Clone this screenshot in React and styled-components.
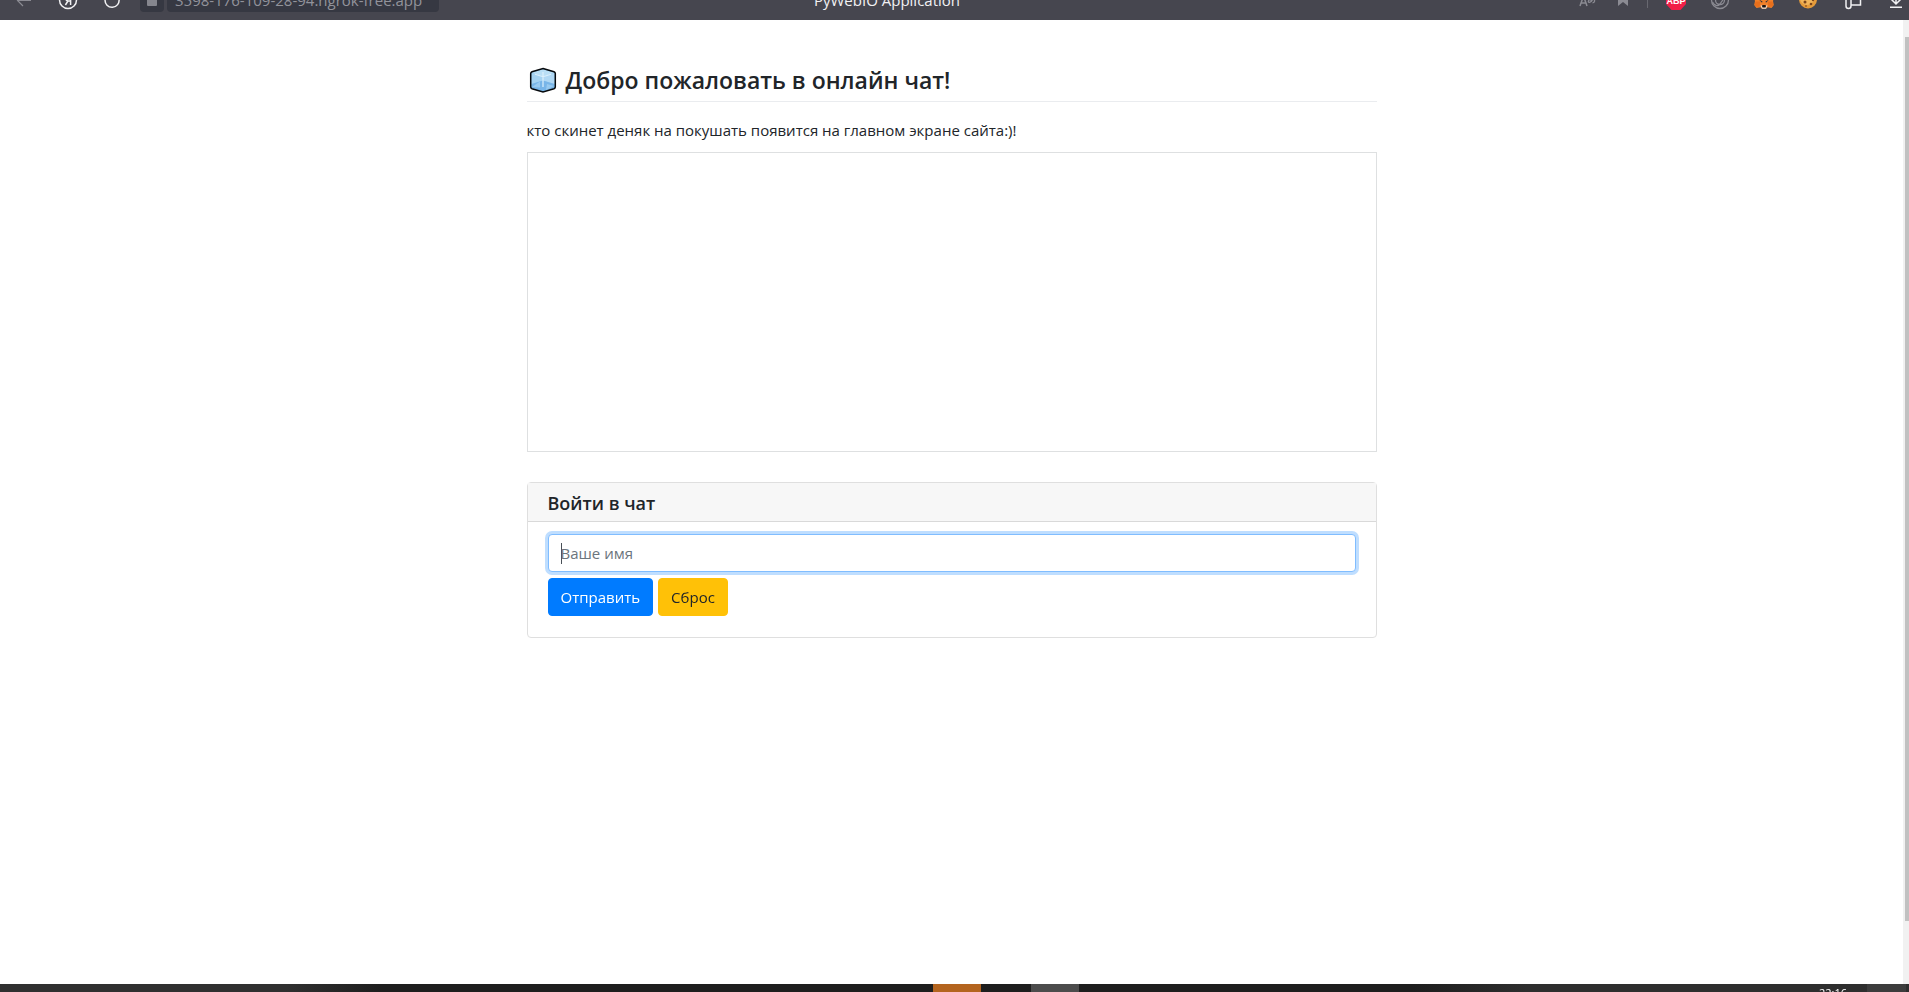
import React, { useState } from "react";
import styled, { createGlobalStyle } from "styled-components";

const GlobalStyle = createGlobalStyle`
  *, *::before, *::after {
    box-sizing: border-box;
  }

  body {
    margin: 0;
    background-color: #fff;
    color: #212529;
    font-family: "Open Sans", "Noto Sans", sans-serif;
    font-size: 15px;
    line-height: 24px;
  }
`;

const Screen = styled.div`
  display: flex;
  flex-direction: column;
  height: 100vh;
  overflow: hidden;
`;

/* browser bar */

const BrowserBar = styled.header`
  display: flex;
  align-items: flex-end;
  flex: none;
  height: 20px;
  padding: 0 1px 8px 12px;
  overflow: hidden;
  background-color: #46464f;
`;

const Group = styled.div`
  display: flex;
  align-items: center;
  gap: ${(props) => props.$gap}px;
`;

const BarButton = styled.button`
  display: flex;
  flex: none;
  width: 24px;
  height: 24px;
  padding: 0;
  border: 0;
  background: none;
  color: ${(props) => (props.$dim ? "#8b8b93" : "#f1f1f3")};
`;

const Address = styled.div`
  display: flex;
  gap: 3px;
  margin-left: 16px;
`;

const LockButton = styled(BarButton)`
  border-radius: 4px;
  background-color: #363842;
  color: #85868e;
`;

const AddressInput = styled.input`
  width: 272px;
  height: 24px;
  padding: 0 8px;
  border: 0;
  border-radius: 4px;
  background-color: #363842;
  color: #92939b;
  font: inherit;
`;

const PageTitle = styled.div`
  flex: 1;
  padding-right: 240px;
  color: #f1f1f3;
  text-align: center;
  white-space: nowrap;
`;

const Divider = styled.span`
  width: 1px;
  height: 16px;
  margin-right: 16px;
  background-color: #686870;
`;

/* page */

const Viewport = styled.div`
  display: flex;
  flex: 1;
  min-height: 0;
`;

const Page = styled.main`
  flex: 1;
  padding: 46px 16px 0;
`;

const Container = styled.div`
  max-width: 850px;
  margin: 0 auto;
`;

const Heading = styled.h2`
  display: flex;
  align-items: center;
  gap: 8px;
  margin: 0 0 16px;
  padding-bottom: 7px;
  border-bottom: 1px solid #eaecef;
  font-size: 23px;
  font-weight: 600;
  line-height: 28px;
`;

const Text = styled.p`
  margin: 0 0 10px;
`;

const MessageBox = styled.div`
  height: 300px;
  margin-bottom: 30px;
  border: 1px solid #dee0e1;
`;

const Card = styled.form`
  border: 1px solid #dfdfdf;
  border-radius: 4px;
`;

const CardHeader = styled.h5`
  margin: 0;
  padding: 8px 20px 6px;
  border-bottom: 1px solid #d9d9d9;
  background-color: #f7f7f7;
  font-size: 18px;
  font-weight: 600;
  line-height: 24px;
`;

const CardBody = styled.div`
  padding: 12px 20px 21px;
`;

const NameInput = styled.input`
  display: block;
  width: 100%;
  height: 38px;
  padding: 6px 12px;
  border: 1px solid #ced4da;
  border-radius: 4px;
  background-color: #fff;
  color: #495057;
  font: inherit;

  &::placeholder {
    color: #6c757d;
  }

  &:focus {
    border-color: #80bdff;
    outline: 0;
    box-shadow: 0 0 0 3px #bfdeff;
  }

  /* steady caret while the field is empty */
  &:focus:placeholder-shown {
    caret-color: transparent;
    background-image: linear-gradient(#495057, #495057);
    background-position: 12px center;
    background-repeat: no-repeat;
    background-size: 1px 21px;
  }
`;

const Actions = styled.div`
  display: flex;
  gap: 5px;
  margin-top: 6px;
`;

const Button = styled.button`
  height: 38px;
  padding: 6px 12px;
  border: 1px solid ${(props) => props.$bg};
  border-radius: 4px;
  background-color: ${(props) => props.$bg};
  color: ${(props) => props.$color};
  font: inherit;
`;

const ScrollTrack = styled.div`
  display: flex;
  flex-direction: column;
  flex: none;
  width: 6px;
  padding: 17px 0 63px 2px;
  background-color: #f1f1f1;
`;

const ScrollThumb = styled.div`
  flex: 1;
  background-color: #c1c1c1;
`;

/* taskbar */

const Taskbar = styled.footer`
  display: flex;
  flex: none;
  height: 8px;
  overflow: hidden;
  background: linear-gradient(
    90deg,
    #303030 15%,
    #1e1e1e 20%,
    #1e1e1e 74%,
    #2e2e2e 80%
  );
`;

const Tasks = styled.div`
  display: flex;
  flex: 1;
  gap: 50px;
  padding-left: 933px;
`;

const Task = styled.div`
  width: 48px;
  background-color: ${(props) => props.$bg};
`;

const Clock = styled.time`
  padding: 1px 20px 0 0;
  color: #fff;
  font-size: 11px;
  line-height: 16px;
`;

const Notifications = styled.div`
  width: 39px;
  margin-right: 3px;
  background-color: #3c3c3c;
`;

const Icon = ({ children }) => (
  <svg
    width="24"
    height="24"
    viewBox="0 0 24 24"
    fill="none"
    stroke="currentColor"
    strokeWidth="1.5"
    aria-hidden="true"
  >
    {children}
  </svg>
);

const BackIcon = () => (
  <Icon>
    <path d="M19 12.5H5.5M11 7l-5.5 5.5L11 18" strokeWidth="1.2" />
  </Icon>
);

const YandexIcon = () => (
  <Icon>
    <circle cx="12" cy="12" r="8.5" />
    <path d="M14.6 17V7.5h-2.2a2.7 2.7 0 0 0 0 5.4h2.2M12 13l-2.6 4" />
  </Icon>
);

const ReloadIcon = () => (
  <Icon>
    <path d="M15.5 6.2A7 7 0 1 1 8 6.6" />
    <path d="M15 2v5h5" />
  </Icon>
);

const LockIcon = () => (
  <Icon>
    <rect x="7" y="9" width="10" height="9" rx="1" fill="currentColor" stroke="none" />
    <path d="M9 9V7a3 3 0 0 1 6 0v2" />
  </Icon>
);

const TranslateIcon = () => (
  <Icon>
    <path d="M5 18l3.5-10L12 18M6 15h5" />
    <path
      d="M13 8.500h6M15.500 6.500c0 4 0 6 1 7.500M18 10.500c-1 3-3.500 4.500-4.500 3.500s2-4 4.500-3 2 3.500-.5 4"
      strokeWidth="1.2"
    />
  </Icon>
);

const BookmarkIcon = () => (
  <Icon>
    <path d="M7 5h10v13l-5-4-5 4z" fill="currentColor" stroke="none" />
  </Icon>
);

const AdblockIcon = () => (
  <Icon>
    <path d="M8 2h8l6 6v8l-5.5 6h-9L2 16V8z" fill="#f21f48" stroke="none" />
    <text
      x="12"
      y="15.5"
      fill="#fff"
      stroke="none"
      fontSize="9"
      fontWeight="800"
      textAnchor="middle"
    >
      ABP
    </text>
  </Icon>
);

const ShieldIcon = () => (
  <Icon>
    <circle cx="12" cy="12" r="8.5" strokeWidth="1.3" />
    <path d="M7.500 9v3a4.500 4.500 0 0 0 9 0V9" strokeWidth="1.3" />
    <path d="M4.500 14c2 3.500 5 4.500 7 2.500L17 9" strokeWidth="1.2" />
  </Icon>
);

const FoxIcon = () => (
  <Icon>
    <g stroke="none">
      <path d="M3 3l7 4h4l7-4 1 7-1 3 .8 4-2.3 3-4-.7-1.500 1.400h-4l-1.500-1.400-4 .7-2.300-3L3 13l-1-3z" fill="#f0812a" />
      <path d="M3.500 13.500h5l-1 5.500-4-.5-.8-1.500zM20.500 13.500h-5l1 5.500 4-.5.8-1.500z" fill="#e86f1c" />
      <path d="M7 11.500l3.500 2-.5 1.200zM17 11.500l-3.500 2 .5 1.200z" fill="#28313c" />
      <path d="M8.500 17.500h7l-1.500 3.300h-4z" fill="#e8dcd2" />
      <path d="M10 18l.5-1h3l.5 1-.5 1.500h-3z" fill="#1c1410" />
    </g>
  </Icon>
);

const CookieIcon = () => (
  <Icon>
    <g stroke="none">
      <circle cx="12" cy="11.5" r="9" fill="#e59b3a" />
      <circle cx="11" cy="10" r="7" fill="#f2b55a" />
      <circle cx="9" cy="14" r="1.5" fill="#7a451c" />
      <circle cx="15" cy="16" r="1.3" fill="#7a451c" />
      <circle cx="17" cy="12" r="1.2" fill="#7a451c" />
      <circle cx="12" cy="11" r="1" fill="#7a451c" />
      <circle cx="10" cy="18" r="1" fill="#a35f22" />
    </g>
  </Icon>
);

const PanelIcon = () => (
  <Icon>
    <path d="M11 17h9.500V5H11" />
    <path d="M11 5v13a2.500 2.500 0 0 1-5 0V5" />
  </Icon>
);

const DownloadIcon = () => (
  <Icon>
    <path d="M12 3v13M6.500 10.500L12 16l5.500-5.500M6 19.300h12" />
  </Icon>
);

const iceOutline =
  "M14 2.5L25 5.800q1.300.5 1.300 1.700v13.600q0 1.200-1.300 1.700L14 26 3 22.800q-1.300-.5-1.300-1.700V7.500Q1.700 6.300 3 5.800z";

const IceIcon = () => (
  <svg width="31" height="28" viewBox="-1 0 29 28" aria-hidden="true">
    <path d={iceOutline} fill="#94c9ee" />
    <path d="M2.500 6.800L14 3.300l11.500 3.500L14 10.500z" fill="#b9dff6" />
    <path d="M2.500 7v11L14 14.500v-4z" fill="#a5d3f2" />
    <path d="M25.500 7v11L14 14.500v-4z" fill="#b0d8f4" />
    <path d="M2.500 18L14 14.500 25.500 18v4L14 25.200 2.500 22z" fill="#78b5e8" />
    <path d="M3 21l8-5.500v6zM25 20l-8 4 1-6z" fill="#98caf0" />
    <path
      d="M6 8.300l8 2.400 8-2.400M14 6v15"
      fill="none"
      stroke="#dcf0fc"
      strokeWidth="1.2"
    />
    <path d={iceOutline} fill="none" stroke="#06090c" strokeWidth="1.5" />
  </svg>
);

const App = () => {
  const [name, setName] = useState("");

  const handleSubmit = (e) => {
    e.preventDefault();
  };

  return (
    <Screen>
      <GlobalStyle />
      <BrowserBar>
        <Group $gap={20}>
          <BarButton type="button" aria-label="Назад" $dim>
            <BackIcon />
          </BarButton>
          <BarButton type="button" aria-label="Яндекс">
            <YandexIcon />
          </BarButton>
          <BarButton type="button" aria-label="Обновить">
            <ReloadIcon />
          </BarButton>
        </Group>
        <Address>
          <LockButton type="button" aria-label="Защита">
            <LockIcon />
          </LockButton>
          <AddressInput
            aria-label="Адрес"
            defaultValue="3598-176-109-28-94.ngrok-free.app"
          />
        </Address>
        <PageTitle>PyWebIO Application</PageTitle>
        <Group $gap={12}>
          <BarButton type="button" aria-label="Перевести" $dim>
            <TranslateIcon />
          </BarButton>
          <BarButton type="button" aria-label="Закладка" $dim>
            <BookmarkIcon />
          </BarButton>
          <Divider />
        </Group>
        <Group $gap={20}>
          <BarButton type="button" aria-label="Adblock Plus">
            <AdblockIcon />
          </BarButton>
          <BarButton type="button" aria-label="Защита от слежки" $dim>
            <ShieldIcon />
          </BarButton>
          <BarButton type="button" aria-label="MetaMask">
            <FoxIcon />
          </BarButton>
          <BarButton type="button" aria-label="Cookie">
            <CookieIcon />
          </BarButton>
          <BarButton type="button" aria-label="Панель">
            <PanelIcon />
          </BarButton>
          <BarButton type="button" aria-label="Загрузки">
            <DownloadIcon />
          </BarButton>
        </Group>
      </BrowserBar>

      <Viewport>
        <Page>
          <Container>
            <Heading>
              <IceIcon />
              Добро пожаловать в онлайн чат!
            </Heading>
            <Text>
              кто скинет деняк на покушать появится на главном экране сайта:)!
            </Text>
            <MessageBox />
            <Card onSubmit={handleSubmit} onReset={() => setName("")}>
              <CardHeader>Войти в чат</CardHeader>
              <CardBody>
                <NameInput
                  type="text"
                  aria-label="Ваше имя"
                  placeholder="Ваше имя"
                  value={name}
                  onChange={(e) => setName(e.target.value)}
                  autoFocus
                />
                <Actions>
                  <Button type="submit" $bg="#007bff" $color="#fff">
                    Отправить
                  </Button>
                  <Button type="reset" $bg="#ffc107" $color="#212529">
                    Сброс
                  </Button>
                </Actions>
              </CardBody>
            </Card>
          </Container>
        </Page>
        <ScrollTrack>
          <ScrollThumb />
        </ScrollTrack>
      </Viewport>

      <Taskbar>
        <Tasks>
          <Task $bg="#b4641e" />
          <Task $bg="#4c4c4c" />
        </Tasks>
        <Clock>22:16</Clock>
        <Notifications />
      </Taskbar>
    </Screen>
  );
};

export default App;
